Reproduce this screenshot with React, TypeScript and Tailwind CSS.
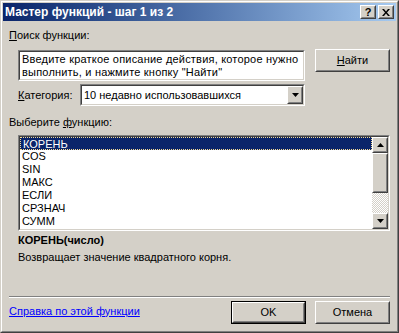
import React from "react";

const font = { fontFamily: '"Liberation Sans", Arial, sans-serif' };

function Raised({ className = "", children }: { className?: string; children?: React.ReactNode }) {
  return (
    <div className={`border border-t-white border-l-white border-r-[#404040] border-b-[#404040] ${className}`}>
      <div className="w-full h-full border border-t-[#d4d0c8] border-l-[#d4d0c8] border-r-[#808080] border-b-[#808080] flex items-center justify-center">
        {children}
      </div>
    </div>
  );
}

function Sunken({ className = "", children }: { className?: string; children?: React.ReactNode }) {
  return (
    <div className={`border border-t-[#808080] border-l-[#808080] border-r-white border-b-white ${className}`}>
      <div className="w-full h-full border border-t-[#404040] border-l-[#404040] border-r-[#d4d0c8] border-b-[#d4d0c8] bg-white flex">
        {children}
      </div>
    </div>
  );
}

function Tri({ up = false }: { up?: boolean }) {
  return (
    <svg width="7" height="4" viewBox="0 0 7 4">
      <path d={up ? "M3.5 0 L7 4 L0 4 Z" : "M0 0 L7 0 L3.5 4 Z"} fill="#000" />
    </svg>
  );
}

const items = ["КОРЕНЬ", "COS", "SIN", "МАКС", "ЕСЛИ", "СРЗНАЧ", "СУММ"];

export default function App() {
  return (
    <div
      className="w-[399px] h-[333px] bg-[#d4d0c8] border border-t-[#d4d0c8] border-l-[#d4d0c8] border-r-[#404040] border-b-[#404040] text-[11px] text-black"
      style={font}
    >
      <div className="w-full h-full border border-t-white border-l-white border-r-[#808080] border-b-[#808080] p-px flex flex-col">
        {/* title bar */}
        <div className="h-[18px] flex items-center bg-gradient-to-r from-[#0a246a] to-[#a6caf0] pl-[2px] pr-[2px]">
          <span className="text-white font-bold text-[12px] leading-[18px]">Мастер функций - шаг 1 из 2</span>
          <div className="ml-auto flex gap-[2px]">
            <Raised className="w-[16px] h-[14px] bg-[#d4d0c8]">
              <span className="font-bold text-[11px] leading-none">?</span>
            </Raised>
            <Raised className="w-[16px] h-[14px] bg-[#d4d0c8]">
              <svg width="8" height="7" viewBox="0 0 8 7">
                <path d="M0 0 L2 0 L4 2.5 L6 0 L8 0 L5 3.5 L8 7 L6 7 L4 4.5 L2 7 L0 7 L3 3.5 Z" fill="#000" />
              </svg>
            </Raised>
          </div>
        </div>

        {/* body */}
        <div className="flex-1 flex flex-col px-[6px] pt-[8px]">
          <div className="leading-[13px]">
            <span className="underline">П</span>оиск функции:
          </div>

          <div className="flex items-start mt-[7px]">
            <Sunken className="ml-[9px] w-[287px] h-[31px] mt-px">
              <div className="pl-[2px] pt-[1px] leading-[13px] tracking-[0.2px]">
                Введите краткое описание действия, которое нужно
                <br />
                выполнить, и нажмите кнопку "Найти"
              </div>
            </Sunken>
            <Raised className="ml-auto w-[75px] h-[23px]">
              <span>
                <span className="underline">Н</span>айти
              </span>
            </Raised>
          </div>

          <div className="flex items-center mt-[3px]">
            <span className="ml-[9px] w-[62px]">
              <span className="underline">К</span>атегория:
            </span>
            <Sunken className="w-[225px] h-[22px]">
              <div className="flex-1 pl-[2px] leading-[18px]">10 недавно использовавшихся</div>
              <Raised className="w-[16px] h-[18px] bg-[#d4d0c8]">
                <Tri />
              </Raised>
            </Sunken>
          </div>

          <div className="leading-[13px] mt-[10px]">
            Выберите <span className="underline">ф</span>ункцию:
          </div>

          <Sunken className="ml-[9px] mt-[6px] h-[96px]">
            <div className="flex-1 flex flex-col">
              {items.map((it, i) => (
                <div
                  key={it}
                  className={`h-[13px] leading-[12px] pl-[2px] ${
                    i === 0 ? "bg-[#0a246a] text-white border border-dotted border-[#f5db95] pl-[1px]" : ""
                  }`}
                >
                  {it}
                </div>
              ))}
            </div>
            <div className="w-[16px] flex flex-col">
              <Raised className="h-[16px] bg-[#d4d0c8]">
                <Tri up />
              </Raised>
              <Raised className="h-[40px] bg-[#d4d0c8]" />
              <div className="flex-1 bg-[repeating-conic-gradient(#ffffff_0%_25%,#d4d0c8_0%_50%)] bg-[length:2px_2px]" />
              <Raised className="h-[16px] bg-[#d4d0c8]">
                <Tri />
              </Raised>
            </div>
          </Sunken>

          <div className="ml-[9px] mt-[3px] font-bold leading-[13px]">КОРЕНЬ(число)</div>
          <div className="ml-[9px] mt-[4px] leading-[13px]">Возвращает значение квадратного корня.</div>

          <div className="mt-[32px] border-t border-t-[#808080] border-b border-b-white" />

          <div className="flex items-center mt-[3px]">
            <span className="text-[#0000ff] underline leading-[13px] -mt-[3px]">Справка по этой функции</span>
            <div className="ml-auto border border-black">
              <Raised className="w-[73px] h-[21px]">OK</Raised>
            </div>
            <Raised className="ml-[9px] w-[75px] h-[23px]">Отмена</Raised>
          </div>
        </div>
      </div>
    </div>
  );
}
